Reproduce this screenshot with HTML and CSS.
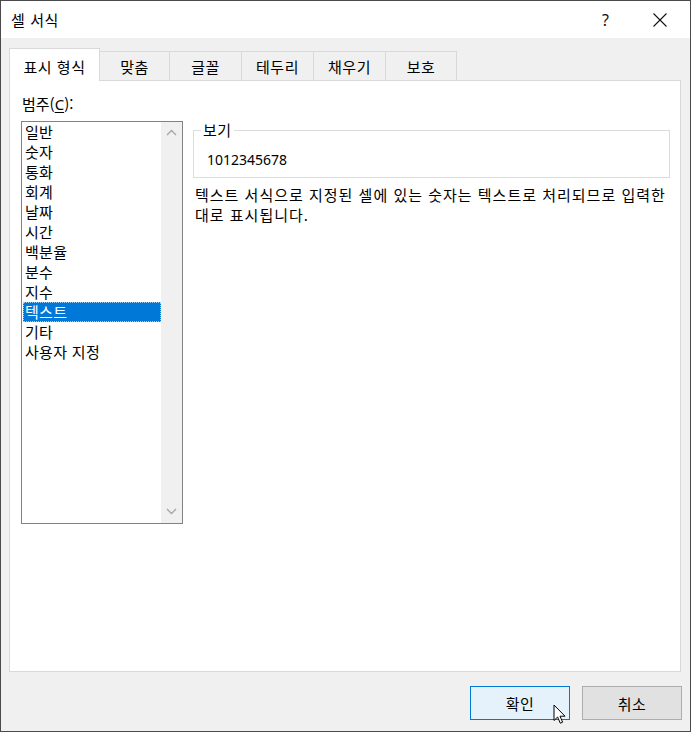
FILE: index.html
```html
<!DOCTYPE html>
<html lang="ko">
<head>
<meta charset="utf-8">
<title>셀 서식</title>
<link rel="stylesheet" href="styles.css">
</head>
<body>
<div class="window">
  <div class="titlebar">
    <span class="title">셀 서식</span>
    <span class="help">?</span>
    <span class="close">
      <svg width="16" height="16" viewBox="0 0 16 16"><path d="M1.5 1.5 L14.5 14.5 M14.5 1.5 L1.5 14.5" stroke="#111" stroke-width="1.1" fill="none"/></svg>
    </span>
  </div>
  <div class="body">
    <div class="tabs">
      <div class="tab active t1">표시 형식</div>
      <div class="tab t2">맞춤</div>
      <div class="tab t3">글꼴</div>
      <div class="tab t4">테두리</div>
      <div class="tab t5">채우기</div>
      <div class="tab t6">보호</div>
    </div>
    <div class="panel">
      <div class="label">범주(<u>C</u>):</div>
      <div class="content">
        <div class="listbox">
          <ul class="items">
            <li>일반</li>
            <li>숫자</li>
            <li>통화</li>
            <li>회계</li>
            <li>날짜</li>
            <li>시간</li>
            <li>백분율</li>
            <li>분수</li>
            <li>지수</li>
            <li class="selected">텍스트</li>
            <li>기타</li>
            <li>사용자 지정</li>
          </ul>
          <div class="scrollbar">
            <svg class="chev" width="11" height="7" viewBox="0 0 11 7"><path d="M1 6 L5.5 1.5 L10 6" stroke="#a6a6a6" stroke-width="1.4" fill="none"/></svg>
            <svg class="chev" width="11" height="7" viewBox="0 0 11 7"><path d="M1 1 L5.5 5.5 L10 1" stroke="#a6a6a6" stroke-width="1.4" fill="none"/></svg>
          </div>
        </div>
        <div class="right">
          <fieldset class="sample">
            <legend>보기</legend>
            <div class="value">1012345678</div>
          </fieldset>
          <p class="desc">텍스트 서식으로 지정된 셀에 있는 숫자는 텍스트로 처리되므로 입력한 대로 표시됩니다.</p>
        </div>
      </div>
    </div>
    <div class="buttons">
      <button class="btn primary">확인</button>
      <button class="btn">취소</button>
    </div>
  </div>
  <svg class="cursor" width="14" height="21" viewBox="0 0 14 21"><path d="M1 1 L1 16.5 L4.6 13 L7.3 19.2 L9.6 18.2 L7 12.2 L12 12.2 Z" fill="#fff" stroke="#000" stroke-width="1" stroke-linejoin="miter"/></svg>
</div>
</body>
</html>
```
FILE: styles.css
```css
* { box-sizing: border-box; }
html, body { margin: 0; padding: 0; }
body {
  font-family: "Noto Sans CJK KR", "Noto Sans", sans-serif;
  font-size: 15px;
  color: #000;
  background: #f0f0f0;
}
.window {
  position: relative;
  width: 691px;
  height: 732px;
  border: 1px solid #4a4a4a;
  display: flex;
  flex-direction: column;
  background: #f0f0f0;
}
.titlebar {
  height: 37px;
  background: #fff;
  display: flex;
  align-items: center;
  padding-left: 10px;
  line-height: 20px;
}
.title { flex: 1; font-size: 15px; letter-spacing: 0.6px; }
.help {
  font-family: "Noto Sans", sans-serif;
  font-size: 16px;
  width: 14px;
  margin-right: 36px;
  color: #111;
}
.close { width: 16px; height: 16px; margin-right: 22px; display: flex; }
.body {
  flex: 1;
  padding: 10px 0 0 8px;
  display: flex;
  flex-direction: column;
}
.tabs {
  position: relative;
  z-index: 1;
  display: flex;
  align-items: flex-end;
  margin-bottom: -1px;
}
.tab {
  height: 30px;
  border: 1px solid #d9d9d9;
  background: #f0f0f0;
  padding-top: 5px;
  line-height: 20px;
  text-align: center;
  margin-left: -1px;
  letter-spacing: 0.5px;
}
.tab.active {
  position: relative;
  z-index: 2;
  height: 33px;
  padding-top: 8px;
  border-bottom: none;
  background: #fff;
  margin-left: 0;
}
.t1 { width: 91px; }
.t2 { width: 71px; }
.t3 { width: 73px; }
.t4 { width: 73px; }
.t5 { width: 73px; }
.t6 { width: 72px; }
.panel {
  width: 672px;
  height: 592px;
  background: #fff;
  border: 1px solid #d9d9d9;
  padding: 13px 0 0 11px;
}
.label {
  line-height: 20px;
  padding-left: 1px;
  margin-bottom: 7px;
}
.label u { font-family: "Noto Sans", sans-serif; text-decoration-thickness: 1px; text-underline-offset: 2px; }
.content { display: flex; align-items: flex-start; }
.listbox {
  width: 162px;
  height: 403px;
  border: 1px solid #828282;
  display: flex;
  background: #fff;
}
.items {
  list-style: none;
  margin: 0;
  padding: 0 0 0 1px;
  flex: 1;
}
.items li {
  height: 20px;
  line-height: 20px;
  padding-left: 2px;
  letter-spacing: 0.3px;
}
.items li.selected {
  background: #0078d7;
  color: #fff;
  outline: 1px dotted #9fd0f5;
  outline-offset: -1px;
}
.scrollbar {
  width: 21px;
  background: #f0f0f0;
  display: flex;
  flex-direction: column;
  justify-content: space-between;
  align-items: center;
  padding: 7px 0 8px;
}
.chev { display: block; }
.right {
  margin-left: 10px;
  width: 477px;
}
.sample {
  margin: 0;
  border: 1px solid #dcdcdc;
  padding: 11px 13px 7px;
  min-width: 0;
}
.sample legend {
  padding: 0 2px;
  margin-left: -6px;
  line-height: 18px;
  letter-spacing: 0.5px;
}
.value {
  font-family: "Noto Sans", sans-serif;
  font-size: 14px;
  line-height: 20px;
}
.desc {
  margin: 7px 0 0;
  padding-left: 2px;
  line-height: 20px;
  letter-spacing: 1px;
}
.buttons {
  display: flex;
  justify-content: flex-end;
  gap: 12px;
  padding: 14px 8px 0 0;
}
.btn {
  width: 100px;
  height: 34px;
  font-family: "Noto Sans CJK KR", "Noto Sans", sans-serif;
  font-size: 15px;
  letter-spacing: 0.5px;
  background: #e1e1e1;
  border: 1px solid #adadad;
  color: #000;
  padding: 0;
  margin: 0;
}
.btn.primary {
  background: #e5f1fb;
  border-color: #0078d7;
}
.cursor {
  position: absolute;
  left: 552px;
  top: 703px;
}
```
